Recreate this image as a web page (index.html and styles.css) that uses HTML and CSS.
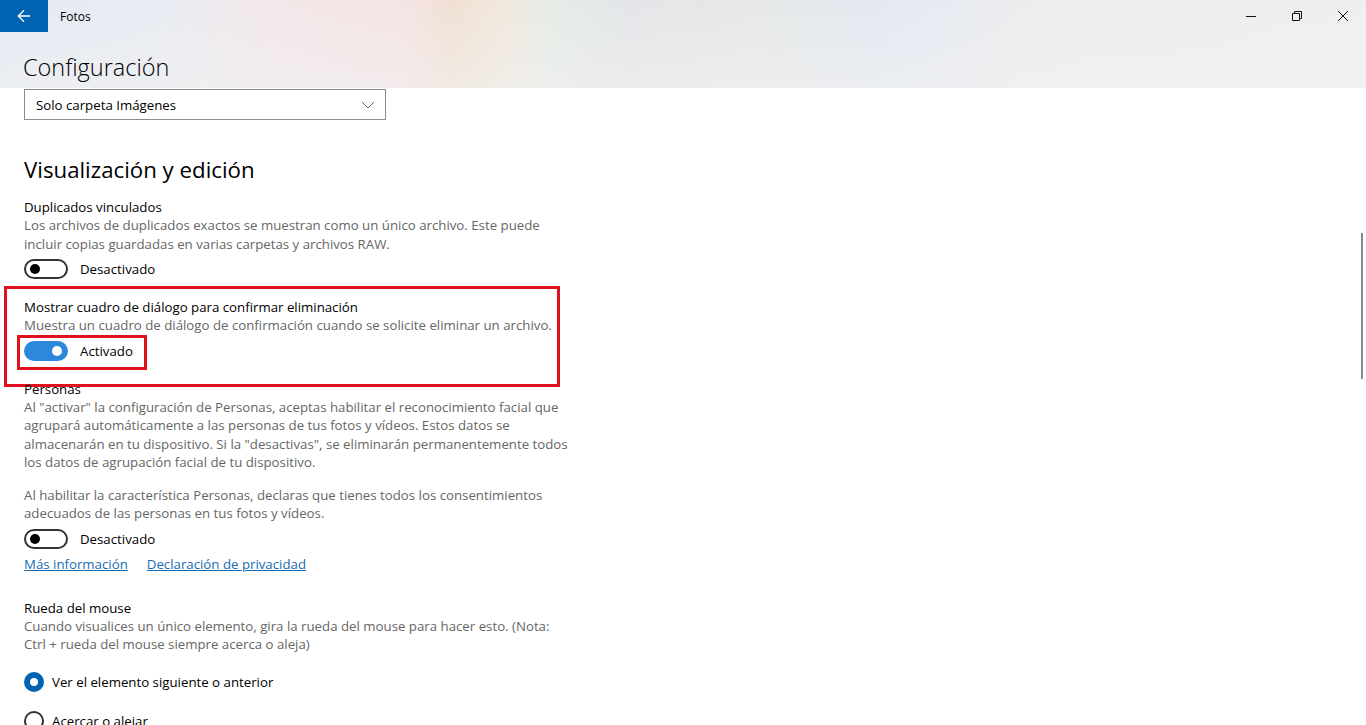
FILE: index.html
```html
<!DOCTYPE html>
<html lang="es">
<head>
    <meta charset="utf-8">
    <title>Fotos - Configuración</title>
    <link rel="stylesheet" href="styles.css">
</head>
<body>
<div class="window">
    <header class="top">
        <div class="titlebar">
            <button class="back" aria-label="Atrás">
                <svg width="14" height="14" viewBox="0 0 14 14"><path d="M13 7H1.5M7 1.3L1.3 7L7 12.7" fill="none" stroke="#fff" stroke-width="1.3"/></svg>
            </button>
            <span class="app-name">Fotos</span>
            <div class="caption">
                <span class="cap-btn"><svg width="10" height="10" viewBox="0 0 10 10"><path d="M0 5.5H10" stroke="#111" stroke-width="1"/></svg></span>
                <span class="cap-btn"><svg width="10" height="10" viewBox="0 0 10 10"><path d="M0.5 2.5H7.5V9.5H0.5Z M2.5 2.5V0.5H9.5V7.5H7.5" fill="none" stroke="#111" stroke-width="1"/></svg></span>
                <span class="cap-btn"><svg width="10" height="10" viewBox="0 0 10 10"><path d="M0 0L10 10M10 0L0 10" stroke="#111" stroke-width="1"/></svg></span>
            </div>
        </div>
        <h1 class="page-title">Configuración</h1>
    </header>

    <main class="content">
        <div class="select">
            <span>Solo carpeta Imágenes</span>
            <svg width="14" height="8" viewBox="0 0 14 8"><path d="M1 1L7 7L13 1" fill="none" stroke="#666" stroke-width="1"/></svg>
        </div>

        <h2 class="section-title">Visualización y edición</h2>

        <div class="setting">
            <div class="setting-name">Duplicados vinculados</div>
            <p class="setting-desc">Los archivos de duplicados exactos se muestran como un único archivo. Este puede incluir copias guardadas en varias carpetas y archivos RAW.</p>
            <div class="toggle-row"><span class="toggle"></span><span>Desactivado</span></div>
        </div>

        <div class="setting highlighted">
            <div class="setting-name">Mostrar cuadro de diálogo para confirmar eliminación</div>
            <p class="setting-desc">Muestra un cuadro de diálogo de confirmación cuando se solicite eliminar un archivo.</p>
            <div class="toggle-row"><span class="toggle on"></span><span>Activado</span></div>
            <span class="mark mark-block"></span>
            <span class="mark mark-toggle"></span>
        </div>

        <div class="setting">
            <div class="setting-name">Personas</div>
            <p class="setting-desc">Al "activar" la configuración de Personas, aceptas habilitar el reconocimiento facial que agrupará automáticamente a las personas de tus fotos y vídeos. Estos datos se almacenarán en tu dispositivo. Si la "desactivas", se eliminarán permanentemente todos los datos de agrupación facial de tu dispositivo.</p>
            <p class="setting-desc second">Al habilitar la característica Personas, declaras que tienes todos los consentimientos adecuados de las personas en tus fotos y vídeos.</p>
            <div class="toggle-row"><span class="toggle"></span><span>Desactivado</span></div>
            <div class="links">
                <a href="#">Más información</a>
                <a href="#">Declaración de privacidad</a>
            </div>
        </div>

        <div class="setting">
            <div class="setting-name">Rueda del mouse</div>
            <p class="setting-desc">Cuando visualices un único elemento, gira la rueda del mouse para hacer esto. (Nota: Ctrl + rueda del mouse siempre acerca o aleja)</p>
            <div class="radios">
                <label class="radio-row"><span class="radio checked"></span>Ver el elemento siguiente o anterior</label>
                <label class="radio-row"><span class="radio"></span>Acercar o alejar</label>
            </div>
        </div>
    </main>

    <div class="scrollbar"></div>
</div>
</body>
</html>
```

FILE: styles.css
```css
* { box-sizing: border-box; }
html, body { margin: 0; padding: 0; }
body { font-family: "Open Sans", "Noto Sans", sans-serif; font-size: 13.25px; color: #000; background: #fff; overflow: hidden; }

.window { position: relative; width: 1366px; height: 725px; overflow: hidden; background: #fff; }

/* header with acrylic-like blur */
.top {
    height: 88px;
    background:
        linear-gradient(to bottom, rgba(242,242,242,0) 0%, rgba(242,242,242,0.55) 100%),
        linear-gradient(to right, #e4e9f2 0%, #e9ecf3 12%, #f3e7e9 20%, #f4e3e3 30%, #f0e0d2 33%, #f1e8dd 37%, #e6ece6 40%, #e3e5e8 46%, #e6e8e6 55%, #e3e8f1 64%, #e6eaf3 68%, #ededec 76%, #efefef 100%);
}
.titlebar { display: flex; align-items: center; height: 32px; }
.back { width: 48px; height: 32px; border: none; background: #0063b1; display: flex; align-items: center; justify-content: center; padding: 0; }
.app-name { font-size: 12px; margin-left: 12px; }
.caption { margin-left: auto; display: flex; }
.cap-btn { width: 46px; height: 32px; display: flex; align-items: center; justify-content: center; }

.page-title { margin: 0; padding: 17px 0 0 23px; font-size: 23.5px; font-weight: 300; line-height: 36px; }

.content { padding: 1px 0 0 24px; width: 572px; }

.select { width: 362px; height: 31px; border: 1px solid #8c8c8c; display: flex; align-items: center; justify-content: space-between; padding: 0 10px 0 11px; }

.section-title { margin: 36px 0 12px; font-size: 22.25px; font-weight: 400; line-height: 28px; }

.setting { position: relative; margin-bottom: 17px; }
.setting-name { line-height: 20px; padding-top: 1px; margin-bottom: -1px; }
.setting-desc { margin: 0; color: #666; line-height: 18.5px; }
.setting-desc.second { margin-top: 14px; }

.toggle-row { display: flex; align-items: center; gap: 12px; height: 20px; margin-top: 6px; }
.toggle { position: relative; width: 44px; height: 20px; border: 2px solid #333; border-radius: 10px; }
.toggle::after { content: ""; position: absolute; left: 4px; top: 3px; width: 10px; height: 10px; border-radius: 50%; background: #000; }
.toggle.on { background: #2b88db; border-color: #2b88db; }
.toggle.on::after { left: auto; right: 4px; background: #fff; }

.mark { position: absolute; border: 3px solid #e0101e; pointer-events: none; }
.mark-block { left: -20px; top: -10px; width: 556px; height: 101px; }
.mark-toggle { left: -7px; top: 39px; width: 130px; height: 35px; }

.links { display: flex; gap: 19px; margin-top: 5px; line-height: 20px; margin-bottom: 23px; }
.links a { color: #1a6bb0; }

.radios { display: flex; flex-direction: column; gap: 19px; margin-top: 18px; }
.radio-row { display: flex; align-items: center; gap: 8px; height: 20px; }
.radio { width: 20px; height: 20px; border-radius: 50%; border: 2px solid #333; }
.radio.checked { border: 6px solid #0063b1; background: #fff; }

.scrollbar { position: absolute; right: 3px; top: 233px; width: 2px; height: 146px; background: #8a8a8a; }
```
